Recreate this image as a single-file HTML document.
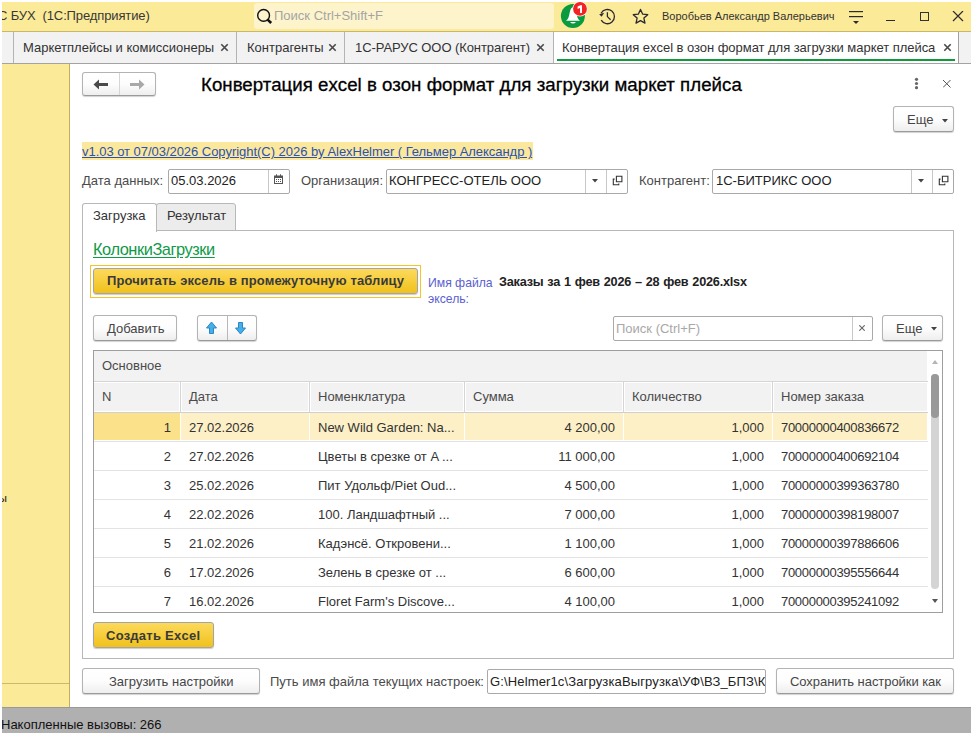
<!DOCTYPE html>
<html><head><meta charset="utf-8">
<style>
*{box-sizing:border-box;margin:0;padding:0}
html,body{width:973px;height:735px;overflow:hidden;background:#fff;font-family:"Liberation Sans",sans-serif;font-size:13px;color:#333}
.a{position:absolute}
.t{position:absolute;white-space:nowrap;line-height:16px}
#hdr{left:2px;top:2px;width:969px;height:30px;background:#fbea97;border-bottom:1px solid #c9b76a;overflow:hidden}
#tabs{left:2px;top:32px;width:969px;height:32px;background:#f2f2f2;border-bottom:1px solid #a3a3a3}
.tsep{position:absolute;top:0;width:1px;height:31px;background:#b4b4b4}
#lp{left:2px;top:64px;width:68px;height:643px;background:#fbea97;border-right:1px solid #bfae60}
#form{left:70px;top:64px;width:901px;height:643px;background:#fff}
#bar{left:2px;top:707px;width:969px;height:26px;background:#b0b0b0;border-top:1px solid #999}
.btn{position:absolute;border:1px solid #b3b3b3;border-bottom-color:#9a9a9a;border-radius:3px;background:linear-gradient(#fff 0%,#fdfdfd 50%,#eeeeee 100%);box-shadow:0 1px 1px rgba(0,0,0,.18)}
.fld{position:absolute;border:1px solid #a9a9a9;border-radius:2px;background:#fff}
.vd{position:absolute;top:0;bottom:0;width:1px;background:#c8c8c8}
.ybtn{position:absolute;border:1px solid #a3a3a8;border-radius:3px;background:linear-gradient(#fcd95c,#f0c21c);box-shadow:0 1px 1px rgba(0,0,0,.2);font-weight:bold;color:#3a3a3a}
</style></head><body>

<!-- header -->
<div id="hdr" class="a">
  <div class="t" style="left:-4px;top:6px;color:#383838;letter-spacing:-0.12px">С БУХ&nbsp;&nbsp;(1С:Предприятие)</div>
</div>
<div class="a" style="left:254px;top:3px;width:300px;height:26px;background:#fdf4cc;border-radius:3px"></div>
<svg class="a" style="left:255px;top:6px" width="20" height="20" viewBox="0 0 20 20"><circle cx="8.6" cy="9.4" r="5.9" fill="none" stroke="#111" stroke-width="1.4"/><path d="M12.6 13.6 L16.2 17" stroke="#111" stroke-width="2.6"/></svg>
<div class="t" style="left:274px;top:8px;color:#a4a4a4">Поиск Ctrl+Shift+F</div>

<svg class="a" style="left:558px;top:0px" width="34" height="30" viewBox="0 0 34 30">
  <circle cx="14.9" cy="16" r="12" fill="#0a9a40"/>
  <path d="M8 20.8C10.2 19.6 11 16.5 11.6 13C12.2 9.5 13.4 7.2 15 7.2C16.6 7.2 17.8 9.5 18.4 13C19 16.5 19.8 19.6 22 20.8Z" fill="#fff"/>
  <path d="M12 22H18Q15 25 12 22Z" fill="#fff"/>
  <circle cx="22" cy="8.9" r="7.6" fill="#fff"/>
  <circle cx="22" cy="8.9" r="6.9" fill="#f42222"/>
  <path d="M19.6 6.6L22.4 5.2H24V12.9H22V7.9L19.6 8.9Z" fill="#fff"/>
</svg>
<svg class="a" style="left:597px;top:6px" width="20" height="20" viewBox="0 0 20 20">
  <path d="M4.1 7.2A7.1 7.1 0 1 1 4.2 14.2" fill="none" stroke="#2a2a33" stroke-width="1.3"/>
  <path d="M2.2 8.2L7.2 6.8L4.6 10.8Z" fill="#2a2a33"/>
  <path d="M10.4 6.3V10.6L13.6 13.8" fill="none" stroke="#2a2a33" stroke-width="1.3"/>
</svg>
<svg class="a" style="left:632px;top:8px" width="18" height="18" viewBox="0 0 18 18">
  <path d="M8.50 1.40 L10.60 6.11 L15.73 6.65 L11.90 10.10 L12.97 15.15 L8.50 12.57 L4.03 15.15 L5.10 10.10 L1.27 6.65 L6.40 6.11Z" fill="none" stroke="#2a2a33" stroke-width="1.3" stroke-linejoin="round"/>
</svg>
<div class="t" style="left:662px;top:8px;font-size:11px;color:#333">Воробьев Александр Валерьевич</div>
<svg class="a" style="left:847px;top:8px" width="18" height="18" viewBox="0 0 18 18">
  <rect x="2" y="3" width="14" height="1.2" fill="#2a2a33"/>
  <rect x="2" y="8" width="14" height="1.2" fill="#2a2a33"/>
  <path d="M6 13h6l-3 3z" fill="#2a2a33"/>
</svg>
<div class="a" style="left:886px;top:20px;width:9px;height:1.2px;background:#2a2a33"></div>
<div class="a" style="left:920px;top:12px;width:9px;height:9px;border:1.5px solid #333"></div>
<svg class="a" style="left:952px;top:11px" width="12" height="11" viewBox="0 0 12 11"><path d="M1 0L11 10M11 0L1 10" stroke="#2a2a33" stroke-width="1.2"/></svg>

<!-- tabs -->
<div id="tabs" class="a">
  <div class="tsep" style="left:11px"></div>
  <div class="tsep" style="left:234px"></div>
  <div class="tsep" style="left:342px"></div>
  <div class="a" style="left:551px;top:0;width:406px;height:31px;background:#fff;border-left:1px solid #b4b4b4;border-right:1px solid #a0a0a0"></div>
  <div class="a" style="left:555px;top:27px;width:398px;height:2px;background:#0f9a3c"></div>
</div>
<div class="t" style="left:23px;top:40px;color:#333">Маркетплейсы и комиссионеры</div>
<div class="t" style="left:247px;top:40px;color:#333">Контрагенты</div>
<div class="t" style="left:355px;top:40px;color:#333;letter-spacing:-0.08px">1С-РАРУС ООО (Контрагент)</div>
<div class="t" style="left:562px;top:40px;color:#333;letter-spacing:-0.04px">Конвертация excel в озон формат для загрузки маркет плейса</div>
<svg class="a" style="left:220px;top:43px" width="9" height="9" viewBox="0 0 9 9"><path d="M1.3 1.3L7.7 7.7M7.7 1.3L1.3 7.7" stroke="#484848" stroke-width="1.6"/></svg>
<svg class="a" style="left:328px;top:43px" width="9" height="9" viewBox="0 0 9 9"><path d="M1.3 1.3L7.7 7.7M7.7 1.3L1.3 7.7" stroke="#484848" stroke-width="1.6"/></svg>
<svg class="a" style="left:536px;top:43px" width="9" height="9" viewBox="0 0 9 9"><path d="M1.3 1.3L7.7 7.7M7.7 1.3L1.3 7.7" stroke="#484848" stroke-width="1.6"/></svg>
<svg class="a" style="left:943px;top:43px" width="9" height="9" viewBox="0 0 9 9"><path d="M1.3 1.3L7.7 7.7M7.7 1.3L1.3 7.7" stroke="#484848" stroke-width="1.6"/></svg>

<div id="lp" class="a" style="overflow:hidden"><div class="a" style="left:0;top:619px;width:67px;height:1px;background:#c9b86e"></div><div class="t" style="left:-3.5px;top:426px;font-size:11.8px;color:#222">ы</div></div>
<div id="form" class="a"></div>
<div id="bar" class="a" style="overflow:hidden"><div class="t" style="left:-1px;top:9px;color:#111">Накопленные вызовы: 266</div></div>

<!-- form content -->
<div class="btn" style="left:82px;top:72px;width:74px;height:24px"><div class="vd" style="left:36px;background:#d6d6d6"></div></div>
<svg class="a" style="left:93px;top:79px" width="16" height="11" viewBox="0 0 16 11"><path d="M0.5 5.5L6 0.5V4H15V7H6V10.5Z" fill="#4a4a4a"/></svg>
<svg class="a" style="left:129px;top:79px" width="16" height="11" viewBox="0 0 16 11"><path d="M15.5 5.5L10 0.5V4H1V7H10V10.5Z" fill="#a8a8a8"/></svg>
<div class="t" style="left:201px;top:74px;font-size:18.67px;line-height:22px;color:#000;-webkit-text-stroke:0.3px #000;letter-spacing:0.03px">Конвертация excel в озон формат для загрузки маркет плейса</div>
<svg class="a" style="left:913px;top:77px" width="7" height="13" viewBox="0 0 7 13"><circle cx="3.5" cy="2.3" r="1.6" fill="#666"/><circle cx="3.5" cy="6.5" r="1.6" fill="#666"/><circle cx="3.5" cy="10.7" r="1.6" fill="#666"/></svg>
<svg class="a" style="left:943px;top:80px" width="8" height="8" viewBox="0 0 8 8"><path d="M0 0L7.5 7.5M7.5 0L0 7.5" stroke="#555" stroke-width="1"/></svg>
<div class="btn" style="left:893px;top:106px;width:61px;height:26px"></div>
<div class="t" style="left:907px;top:112px;color:#454545">Еще</div>
<svg class="a" style="left:941.5px;top:119px" width="6" height="4" viewBox="0 0 6 4"><path d="M0 0H6L3 3.5Z" fill="#444"/></svg>

<div class="a" style="left:82px;top:142px;width:451px;height:18px;background:#fbe89c"></div>
<div class="t" style="left:82px;top:144px;color:#2b52b0;text-decoration:underline;letter-spacing:-0.04px">v1.03 от 07/03/2026 Copyright(C) 2026 by AlexHelmer ( Гельмер Александр )</div>

<div class="t" style="left:82px;top:173px;color:#4a4a4a">Дата данных:</div>
<div class="fld" style="left:168px;top:169px;width:122px;height:25px"><div class="vd" style="left:99px"></div></div>
<div class="t" style="left:171px;top:173px;color:#222">05.03.2026</div>
<svg class="a" style="left:273px;top:174px" width="11" height="11" viewBox="0 0 11 11"><rect x="1" y="1.5" width="9" height="8.5" fill="#555"/><rect x="2" y="4" width="7" height="5" fill="#fff"/><path d="M3 5h1v1h-1zM5 5h1v1h-1zM7 5h1v1h-1zM3 7h1v1h-1zM5 7h1v1h-1zM7 7h1v1h-1z" fill="#555"/><rect x="3" y="0.3" width="1" height="2" fill="#555"/><rect x="7" y="0.3" width="1" height="2" fill="#555"/></svg>

<div class="t" style="left:301px;top:173px;color:#4a4a4a">Организация:</div>
<div class="fld" style="left:386px;top:169px;width:242px;height:25px"><div class="vd" style="left:198px"></div><div class="vd" style="left:219px"></div></div>
<div class="t" style="left:389px;top:173px;color:#222">КОНГРЕСС-ОТЕЛЬ ООО</div>
<svg class="a" style="left:592px;top:179px" width="6" height="4" viewBox="0 0 6 4"><path d="M0 0H6L3 3.5Z" fill="#444"/></svg>
<svg class="a" style="left:611px;top:174px" width="12" height="12" viewBox="0 0 12 12"><path d="M5.4 2.3h5.5v5.4h-5.5z" fill="none" stroke="#333" stroke-width="1.1"/><path d="M3.6 5.1H2.3V10.7H7.8V9.5" fill="none" stroke="#333" stroke-width="1.1"/></svg>

<div class="t" style="left:639px;top:173px;color:#4a4a4a">Контрагент:</div>
<div class="fld" style="left:712px;top:169px;width:242px;height:25px"><div class="vd" style="left:198px"></div><div class="vd" style="left:219px"></div></div>
<div class="t" style="left:716px;top:173px;color:#222">1С-БИТРИКС ООО</div>
<svg class="a" style="left:918px;top:179px" width="6" height="4" viewBox="0 0 6 4"><path d="M0 0H6L3 3.5Z" fill="#444"/></svg>
<svg class="a" style="left:937px;top:174px" width="12" height="12" viewBox="0 0 12 12"><path d="M5.4 2.3h5.5v5.4h-5.5z" fill="none" stroke="#333" stroke-width="1.1"/><path d="M3.6 5.1H2.3V10.7H7.8V9.5" fill="none" stroke="#333" stroke-width="1.1"/></svg>

<!-- tab strip -->
<div class="a" style="left:82px;top:230px;width:872px;height:429px;border:1px solid #b8b8b8"></div>
<div class="a" style="left:156px;top:203px;width:80px;height:28px;background:#ececec;border:1px solid #b8b8b8;border-radius:3px 3px 0 0"></div>
<div class="a" style="left:82px;top:203px;width:75px;height:29px;background:#fff;border:1px solid #b8b8b8;border-bottom:none;border-radius:3px 3px 0 0"></div>
<div class="t" style="left:93px;top:208px;color:#333">Загрузка</div>
<div class="t" style="left:167px;top:208px;color:#333">Результат</div>

<div class="t" style="left:93px;top:240px;font-size:16.4px;line-height:18px;letter-spacing:-0.45px;color:#0f9a48;text-decoration:underline;text-underline-offset:2px">КолонкиЗагрузки</div>

<div class="a" style="left:90px;top:265px;width:331px;height:33px;border:1px solid #f2c52a"></div>
<div class="ybtn" style="left:93px;top:268px;width:325px;height:26px"></div>
<div class="t" style="left:107px;top:273px;font-weight:bold;color:#3a3a3a;letter-spacing:0.12px">Прочитать эксель в промежуточную таблицу</div>

<div class="t" style="left:428px;top:275px;font-size:12.2px;color:#5b5fd0">Имя файла</div>
<div class="t" style="left:428px;top:291px;font-size:12.2px;color:#5b5fd0">эксель:</div>
<div class="t" style="left:499px;top:274px;font-weight:bold;font-size:12.7px;letter-spacing:-0.22px;word-spacing:0.6px;color:#222">Заказы за 1 фев 2026 – 28 фев 2026.xlsx</div>

<div class="btn" style="left:93px;top:315px;width:84px;height:26px"></div>
<div class="t" style="left:107px;top:321px;color:#454545">Добавить</div>
<div class="btn" style="left:197px;top:315px;width:60px;height:26px"><div class="vd" style="left:29px;background:#b8b8b8"></div></div>
<svg class="a" style="left:205px;top:321px" width="13" height="14" viewBox="0 0 13 14"><path d="M6.5 1L11.5 7H8.5V12.5H4.5V7H1.5Z" fill="#46aee8" stroke="#2b87c2" stroke-width="1"/></svg>
<svg class="a" style="left:234px;top:321px" width="13" height="14" viewBox="0 0 13 14"><path d="M6.5 13L11.5 7H8.5V1.5H4.5V7H1.5Z" fill="#46aee8" stroke="#2b87c2" stroke-width="1"/></svg>

<div class="fld" style="left:613px;top:316px;width:260px;height:25px"><div class="vd" style="left:238px"></div></div>
<div class="t" style="left:616px;top:321px;color:#a8a8a8">Поиск (Ctrl+F)</div>
<svg class="a" style="left:859px;top:325px" width="6" height="6" viewBox="0 0 6 6"><path d="M0.3 0.3L5.7 5.7M5.7 0.3L0.3 5.7" stroke="#666" stroke-width="1.1"/></svg>
<div class="btn" style="left:882px;top:315px;width:61px;height:26px"></div>
<div class="t" style="left:896px;top:321px;color:#454545">Еще</div>
<svg class="a" style="left:931px;top:327px" width="6" height="4" viewBox="0 0 6 4"><path d="M0 0H6L3 3.5Z" fill="#444"/></svg>

<!-- table -->
<div id="tbl" class="a" style="left:93px;top:350px;width:850px;height:263px;border:1px solid #9e9e9e;overflow:hidden;background:#fff">
<div class="a" style="left:0px;top:0px;width:833px;height:61px;background:#f2f2f2"></div>
<div class="a" style="left:0px;top:30px;width:834px;height:1px;background:#d5d5d5"></div>
<div class="a" style="left:0px;top:31px;width:833px;height:1px;background:#fff"></div>
<div class="a" style="left:0px;top:60px;width:833px;height:1px;background:#fff"></div>
<div class="a" style="left:0px;top:61px;width:834px;height:1px;background:#cfcfcf"></div>
<div class="a" style="left:85px;top:31px;width:1px;height:29px;background:#fff"></div>
<div class="a" style="left:86px;top:31px;width:1px;height:30px;background:#d5d5d5"></div>
<div class="a" style="left:87px;top:31px;width:1px;height:29px;background:#fff"></div>
<div class="a" style="left:214px;top:31px;width:1px;height:29px;background:#fff"></div>
<div class="a" style="left:215px;top:31px;width:1px;height:30px;background:#d5d5d5"></div>
<div class="a" style="left:216px;top:31px;width:1px;height:29px;background:#fff"></div>
<div class="a" style="left:369px;top:31px;width:1px;height:29px;background:#fff"></div>
<div class="a" style="left:370px;top:31px;width:1px;height:30px;background:#d5d5d5"></div>
<div class="a" style="left:371px;top:31px;width:1px;height:29px;background:#fff"></div>
<div class="a" style="left:528px;top:31px;width:1px;height:29px;background:#fff"></div>
<div class="a" style="left:529px;top:31px;width:1px;height:30px;background:#d5d5d5"></div>
<div class="a" style="left:530px;top:31px;width:1px;height:29px;background:#fff"></div>
<div class="a" style="left:677px;top:31px;width:1px;height:29px;background:#fff"></div>
<div class="a" style="left:678px;top:31px;width:1px;height:30px;background:#d5d5d5"></div>
<div class="a" style="left:679px;top:31px;width:1px;height:29px;background:#fff"></div>
<div class="t" style="left:8px;top:7px;color:#4a4a4a">Основное</div>
<div class="t" style="left:8px;top:38px;color:#4a4a4a">N</div>
<div class="t" style="left:95px;top:38px;color:#4a4a4a">Дата</div>
<div class="t" style="left:224px;top:38px;color:#4a4a4a">Номенклатура</div>
<div class="t" style="left:379px;top:38px;color:#4a4a4a">Сумма</div>
<div class="t" style="left:538px;top:38px;color:#4a4a4a">Количество</div>
<div class="t" style="left:687px;top:38px;color:#4a4a4a">Номер заказа</div>
<div class="a" style="left:0px;top:62px;width:86px;height:27px;background:#fce18b"></div>
<div class="a" style="left:87px;top:62px;width:746px;height:27px;background:#fdf0c6"></div>
<div class="a" style="left:86px;top:62px;width:1px;height:27px;background:#fff"></div>
<div class="a" style="left:215px;top:62px;width:1px;height:27px;background:#fff"></div>
<div class="a" style="left:370px;top:62px;width:1px;height:27px;background:#fff"></div>
<div class="a" style="left:529px;top:62px;width:1px;height:27px;background:#fff"></div>
<div class="a" style="left:678px;top:62px;width:1px;height:27px;background:#fff"></div>
<div class="a" style="left:0px;top:90px;width:834px;height:1px;background:#e3e3e3"></div>
<div class="t" style="left:-123px;top:69px;width:200px;text-align:right;color:#333">1</div>
<div class="t" style="left:95px;top:69px;color:#333">27.02.2026</div>
<div class="t" style="left:224px;top:69px;color:#333">New Wild Garden: Na...</div>
<div class="t" style="left:321px;top:69px;width:200px;text-align:right;color:#333">4 200,00</div>
<div class="t" style="left:470px;top:69px;width:200px;text-align:right;color:#333">1,000</div>
<div class="t" style="left:687px;top:69px;letter-spacing:-0.3px;color:#333">70000000400836672</div>
<div class="a" style="left:0px;top:119px;width:834px;height:1px;background:#e3e3e3"></div>
<div class="t" style="left:-123px;top:98px;width:200px;text-align:right;color:#333">2</div>
<div class="t" style="left:95px;top:98px;color:#333">27.02.2026</div>
<div class="t" style="left:224px;top:98px;color:#333">Цветы в срезке от A ...</div>
<div class="t" style="left:321px;top:98px;width:200px;text-align:right;color:#333">11 000,00</div>
<div class="t" style="left:470px;top:98px;width:200px;text-align:right;color:#333">1,000</div>
<div class="t" style="left:687px;top:98px;letter-spacing:-0.3px;color:#333">70000000400692104</div>
<div class="a" style="left:0px;top:148px;width:834px;height:1px;background:#e3e3e3"></div>
<div class="t" style="left:-123px;top:127px;width:200px;text-align:right;color:#333">3</div>
<div class="t" style="left:95px;top:127px;color:#333">25.02.2026</div>
<div class="t" style="left:224px;top:127px;color:#333">Пит Удольф/Piet Oud...</div>
<div class="t" style="left:321px;top:127px;width:200px;text-align:right;color:#333">4 500,00</div>
<div class="t" style="left:470px;top:127px;width:200px;text-align:right;color:#333">1,000</div>
<div class="t" style="left:687px;top:127px;letter-spacing:-0.3px;color:#333">70000000399363780</div>
<div class="a" style="left:0px;top:177px;width:834px;height:1px;background:#e3e3e3"></div>
<div class="t" style="left:-123px;top:156px;width:200px;text-align:right;color:#333">4</div>
<div class="t" style="left:95px;top:156px;color:#333">22.02.2026</div>
<div class="t" style="left:224px;top:156px;color:#333">100. Ландшафтный ...</div>
<div class="t" style="left:321px;top:156px;width:200px;text-align:right;color:#333">7 000,00</div>
<div class="t" style="left:470px;top:156px;width:200px;text-align:right;color:#333">1,000</div>
<div class="t" style="left:687px;top:156px;letter-spacing:-0.3px;color:#333">70000000398198007</div>
<div class="a" style="left:0px;top:206px;width:834px;height:1px;background:#e3e3e3"></div>
<div class="t" style="left:-123px;top:185px;width:200px;text-align:right;color:#333">5</div>
<div class="t" style="left:95px;top:185px;color:#333">21.02.2026</div>
<div class="t" style="left:224px;top:185px;color:#333">Кадэнсё. Откровени...</div>
<div class="t" style="left:321px;top:185px;width:200px;text-align:right;color:#333">1 100,00</div>
<div class="t" style="left:470px;top:185px;width:200px;text-align:right;color:#333">1,000</div>
<div class="t" style="left:687px;top:185px;letter-spacing:-0.3px;color:#333">70000000397886606</div>
<div class="a" style="left:0px;top:235px;width:834px;height:1px;background:#e3e3e3"></div>
<div class="t" style="left:-123px;top:214px;width:200px;text-align:right;color:#333">6</div>
<div class="t" style="left:95px;top:214px;color:#333">17.02.2026</div>
<div class="t" style="left:224px;top:214px;color:#333">Зелень в срезке от ...</div>
<div class="t" style="left:321px;top:214px;width:200px;text-align:right;color:#333">6 600,00</div>
<div class="t" style="left:470px;top:214px;width:200px;text-align:right;color:#333">1,000</div>
<div class="t" style="left:687px;top:214px;letter-spacing:-0.3px;color:#333">70000000395556644</div>
<div class="a" style="left:0px;top:264px;width:834px;height:1px;background:#e3e3e3"></div>
<div class="t" style="left:-123px;top:243px;width:200px;text-align:right;color:#333">7</div>
<div class="t" style="left:95px;top:243px;color:#333">16.02.2026</div>
<div class="t" style="left:224px;top:243px;color:#333">Floret Farm's Discove...</div>
<div class="t" style="left:321px;top:243px;width:200px;text-align:right;color:#333">4 100,00</div>
<div class="t" style="left:470px;top:243px;width:200px;text-align:right;color:#333">1,000</div>
<div class="t" style="left:687px;top:243px;letter-spacing:-0.3px;color:#333">70000000395241092</div>
<svg class="a" style="left:837px;top:8px" width="8" height="6" viewBox="0 0 8 6"><path d="M1 5H7L4 1Z" fill="#b4b4b4"/></svg>
<div class="a" style="left:837px;top:23px;width:8px;height:215px;background:#d4d4d4;border-radius:4px"></div>
<div class="a" style="left:837px;top:23px;width:8px;height:44px;background:#999;border-radius:4px"></div>
<svg class="a" style="left:837px;top:247px" width="8" height="6" viewBox="0 0 8 6"><path d="M1 1H7L4 5Z" fill="#555"/></svg>
</div>

<div class="ybtn" style="left:93px;top:622px;width:121px;height:26px"></div>
<div class="t" style="left:106px;top:628px;font-weight:bold;color:#3a3a3a;letter-spacing:0.25px">Создать Excel</div>

<div class="btn" style="left:82px;top:668px;width:178px;height:26px"></div>
<div class="t" style="left:109px;top:674px;color:#454545">Загрузить настройки</div>
<div class="t" style="left:270px;top:674px;color:#4a4a4a">Путь имя файла текущих настроек:</div>
<div class="fld" style="left:487px;top:669px;width:279px;height:25px;overflow:hidden"><div class="t" style="left:2px;top:4px;color:#222;letter-spacing:0.14px">G:\Helmer1c\ЗагрузкаВыгрузка\УФ\ВЗ_БПЗ\К</div></div>
<div class="btn" style="left:776px;top:668px;width:178px;height:26px"></div>
<div class="t" style="left:790px;top:674px;color:#454545;letter-spacing:-0.06px">Сохранить настройки как</div>

</body></html>
